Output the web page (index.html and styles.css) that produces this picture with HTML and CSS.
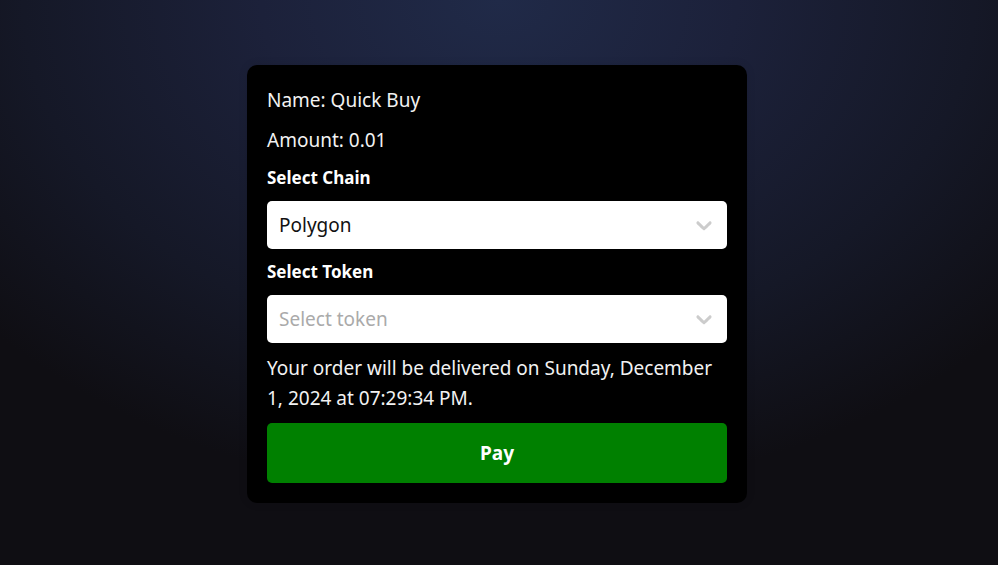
FILE: index.html
```html
<!DOCTYPE html>
<html lang="en">
<head>
<meta charset="utf-8">
<meta name="viewport" content="width=device-width, initial-scale=1">
<title>Quick Buy</title>
<link rel="stylesheet" href="styles.css">
</head>
<body>
<main class="page">
  <form class="card">
    <p class="text">Name: Quick Buy</p>
    <p class="text">Amount: 0.01</p>
    <label class="label" for="chain">Select Chain</label>
    <div class="field">
      <select class="select" id="chain">
        <option selected>Polygon</option>
      </select>
      <svg class="chevron" viewBox="0 0 20 20" aria-hidden="true"><path d="M4.516 7.548c.436-.446 1.043-.481 1.576 0L10 11.295l3.908-3.747c.533-.481 1.141-.446 1.574 0 .436.445.408 1.197 0 1.615-.406.418-4.695 4.502-4.695 4.502a1.095 1.095 0 0 1-1.576 0S4.924 9.581 4.516 9.163c-.409-.418-.436-1.17 0-1.615z"/></svg>
    </div>
    <label class="label" for="token">Select Token</label>
    <div class="field">
      <select class="select" id="token" required>
        <option value="" selected disabled>Select token</option>
      </select>
      <svg class="chevron" viewBox="0 0 20 20" aria-hidden="true"><path d="M4.516 7.548c.436-.446 1.043-.481 1.576 0L10 11.295l3.908-3.747c.533-.481 1.141-.446 1.574 0 .436.445.408 1.197 0 1.615-.406.418-4.695 4.502-4.695 4.502a1.095 1.095 0 0 1-1.576 0S4.924 9.581 4.516 9.163c-.409-.418-.436-1.17 0-1.615z"/></svg>
    </div>
    <p class="text">Your order will be delivered on Sunday, December 1, 2024 at 07:29:34 PM.</p>
    <button class="pay" type="submit">Pay</button>
  </form>
</main>
</body>
</html>
```
FILE: styles.css
```css
* {
  box-sizing: border-box;
}

body {
  margin: 0;
  background: #0f0e13;
  color: #f2f2f2;
  font-family: "Segoe UI", "Noto Sans", "Open Sans", sans-serif;
  font-size: 19px;
  line-height: 30px;
}

.page {
  display: flex;
  align-items: center;
  justify-content: center;
  min-height: 100vh;
  padding: 3px 4px 0 0;
  background: radial-gradient(ellipse 68% 88% at 50% 0%, #202a48 0%, #1c213a 35%, #151827 70%, #0f0e13 100%);
}

.card {
  display: flex;
  flex-direction: column;
  gap: 10px;
  width: 100%;
  max-width: 500px;
  padding: 20px;
  border-radius: 10px;
  background: #000;
  box-shadow: 0 0 10px rgba(0, 0, 0, 0.1);
}

.text {
  margin: 0;
}

.label {
  color: #fff;
  font-size: 17px;
  font-weight: 700;
  line-height: 26px;
}

.field {
  position: relative;
  display: flex;
}

.select {
  width: 100%;
  height: 48px;
  padding: 0 44px 0 12px;
  border: 0;
  border-radius: 5px;
  appearance: none;
  background: #fff;
  color: #111;
  font: inherit;
}

.select:invalid {
  color: #aaa;
  opacity: 1;
}

.chevron {
  position: absolute;
  top: 11px;
  right: 10px;
  width: 26px;
  height: 26px;
  fill: #ccc;
  pointer-events: none;
}

.pay {
  height: 60px;
  border: 0;
  border-radius: 5px;
  background: #008000;
  color: #fff;
  font: inherit;
  font-weight: 700;
  cursor: pointer;
}
```
